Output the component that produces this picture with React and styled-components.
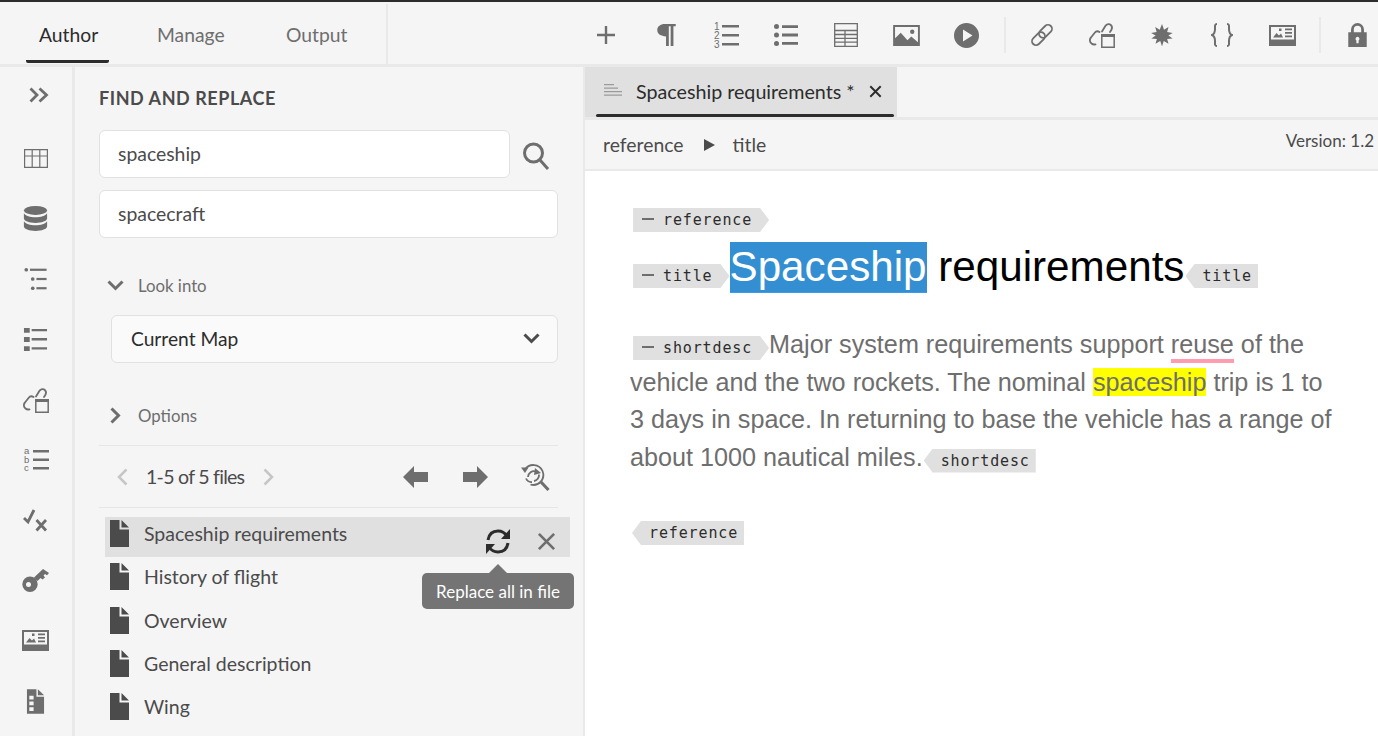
import React from "react";
import styled, { createGlobalStyle } from "styled-components";

const Global = createGlobalStyle`
  html, body { margin: 0; padding: 0; height: 100%; overflow: hidden; background: #fff; }
  body { font-family: "Lato", "Open Sans", sans-serif; }
  * { box-sizing: border-box; }
`;

const Page = styled.div`
  width: 1378px; height: 736px; display: flex; flex-direction: column;
  border-top: 2px solid #2c2c2c; overflow: hidden;
`;
const Header = styled.header`
  height: 65px; flex: none; display: flex; background: #f5f5f5; border-bottom: 3px solid #e9e9e9;
`;
const Tabs = styled.nav`
  width: 388px; flex: none; display: flex; padding-left: 26px; border-right: 2px solid #e9e9e9; margin-top: 2px;
`;
const Tab = styled.div`
  width: ${p => p.$w}px; height: 59px; padding: 18px 0 0 ${p => p.$pad}px; font-size: 19.3px; line-height: 26px;
  color: ${p => (p.$active ? "#2c2c2c" : "#6e6e6e")};
  border-bottom: 3px solid ${p => (p.$active ? "#2c2c2c" : "transparent")};
  border-radius: 0 0 2px 2px;
`;
const Tools = styled.div`
  flex: 1; display: flex; align-items: center; padding: 4px 0 0 188px; min-width: 0;
`;
const ToolSlot = styled.span`
  width: 60px; flex: none; display: flex; justify-content: center; align-items: center;
`;
const ToolSep = styled.span`
  width: 2px; height: 36px; background: #e9e9e9; flex: none; margin: 0 ${p => p.$r}px 0 ${p => p.$l}px;
`;
const Main = styled.div`flex: 1; display: flex; min-height: 0;`;
const Rail = styled.aside`
  width: 75px; flex: none; background: #f5f5f5; border-right: 3px solid #e9e9e9;
  display: flex; flex-direction: column; align-items: center; padding-right: 1px;
`;
const RailSlot = styled.span`
  height: ${p => (p.$first ? 56 : 60.35)}px; margin-bottom: ${p => (p.$first ? 5 : 0)}px; flex: none;
  display: flex; align-items: center; justify-content: center; width: 100%;
  padding-left: ${p => (p.$first ? 6 : 0)}px;
`;
const Panel = styled.section`
  width: 510px; flex: none; background: #f5f5f5; border-right: 2px solid #e9e9e9;
  padding: 0 25px 0 24px; position: relative; display: flex; flex-direction: column;
`;
const Title = styled.h2`
  margin: 19px 0 0; font-size: 18px; line-height: 24px; font-weight: 700; color: #4b4b4b; letter-spacing: .55px;
`;
const SearchRow = styled.div`display: flex; align-items: center; margin-top: 20px;`;
const Field = styled.div`
  height: 48px; flex: ${p => (p.$grow ? 1 : "none")}; background: #fff; border: 1px solid #e1e1e1; border-radius: 6px;
  padding: 0 0 1px 18px; display: flex; align-items: center; font-size: 19.4px; color: #4b4b4b;
  margin-top: ${p => p.$mt || 0}px;
`;
const SearchBtn = styled.span`width: 48px; flex: none; display: flex; justify-content: center; align-items: center; padding: 3px 0 0 3px;`;
const Disclosure = styled.div`
  display: flex; align-items: center; margin: ${p => p.$mt}px 0 0 8px; font-size: 16.8px; color: #6e6e6e; height: 24px; gap: 14px;
`;
const Chevron = styled.span`width: 17px; display: flex; justify-content: center;`;
const Select = styled.div`
  height: 48px; margin: 18px 0 0 12px; background: #fafafa; border: 1px solid #e1e1e1; border-radius: 6px;
  padding: 0 17px 1px 19px; display: flex; align-items: center; justify-content: space-between; font-size: 19.2px; color: #2c2c2c;
`;
const Rule = styled.hr`border: 0; height: 1px; background: #e6e6e6; margin: ${p => p.$mt}px 0 0;`;
const Pager = styled.div`
  height: 61px; display: flex; align-items: center; padding-left: 18px; font-size: 19.6px; color: #4b4b4b;
`;
const PagerLabel = styled.span`width: 100px; margin: 0 17px 0 18px; white-space: nowrap; letter-spacing: -0.75px;`;
const PagerActions = styled.div`display: flex; align-items: center; margin-left: auto; margin-right: -7px;`;
const PagerBtn = styled.span`width: 60px; display: flex; justify-content: center;`;
const List = styled.div`margin: 9px -12px 0 6px;`;
const Row = styled.div`
  height: 40px; margin-bottom: 3.33px; display: flex; padding: 3px 0 0 4px;
  background: ${p => (p.$active ? "#e0e0e0" : "transparent")};
`;
const RowName = styled.span`margin-left: 15px; font-size: 19.5px; line-height: 28px; color: #4b4b4b;`;
const RowActions = styled.div`margin-left: auto; display: flex; align-items: center; height: 42px;`;
const RowBtn = styled.span`width: 48px; display: flex; justify-content: center;`;
const Tooltip = styled.div`
  position: absolute; left: 347px; top: 506px; width: 152px; height: 36px; background: #747474; border-radius: 5px;
  color: #fff; font-size: 17px; display: flex; align-items: center; justify-content: center; white-space: nowrap;
  &::before {
    content: ""; position: absolute; left: 67px; top: -9px;
    border-left: 9px solid transparent; border-right: 9px solid transparent; border-bottom: 9px solid #747474;
  }
`;
const Workspace = styled.main`flex: 1; min-width: 0; display: flex; flex-direction: column; background: #fff;`;
const TabBar = styled.div`height: 53px; flex: none; background: #f5f5f5; border-bottom: 3px solid #e9e9e9;`;
const DocTab = styled.div`
  width: 312px; height: 50px; background: #e0e0e0; display: flex; align-items: center; padding: 0 0 2px 19px; position: relative;
  font-size: 19.7px; color: #2c2c2c;
  &::after { content: ""; position: absolute; left: 11px; right: 3px; bottom: 0; height: 3px; background: #2c2c2c; border-radius: 2px; }
`;
const DocName = styled.span`margin: 0 14px 0 14px; white-space: nowrap;`;
const Crumbs = styled.div`
  height: 51px; flex: none; background: #f5f5f5; border-bottom: 2px solid #e9e9e9; display: flex; align-items: center;
  padding: 0 4px 0 18px; font-size: 19.4px; color: #4b4b4b; position: relative;
`;
const CrumbArrow = styled.span`margin: 0 18px 0 20px; display: flex;`;
const Version = styled.span`margin-left: auto; font-size: 17px; align-self: flex-start; margin-top: 10px;`;
const Doc = styled.article`flex: 1; padding: 37px 0 0 45px; width: 760px;`;
const Tag = styled.span`
  display: inline-block; height: 24px; line-height: 24px; font-family: "DejaVu Sans Mono", "Liberation Mono", monospace;
  font-size: 15px; letter-spacing: .87px; color: #2c2c2c; background: #e0e0e0; white-space: nowrap; vertical-align: baseline;
`;
const StartTag = styled(Tag)`
  padding: 0 17px 0 9px; margin-left: 3px;
  clip-path: polygon(0 0, calc(100% - 9px) 0, 100% 50%, calc(100% - 9px) 100%, 0 100%);
`;
const EndTag = styled(Tag)`
  padding: 0 6px 0 17px; margin-left: 1px;
  clip-path: polygon(9px 0, 100% 0, 100% 100%, 9px 100%, 0 50%);
`;
const Dash = styled.span`
  display: inline-block; width: 12px; height: 2px; background: #6e6e6e; vertical-align: 5px; margin-right: 9px;
`;
const RootLine = styled.div`height: 33px;`;
const Heading = styled.h1`
  margin: 0; font: 400 42.2px/52px "Liberation Sans", Arial, sans-serif; color: #000; height: 52px; white-space: nowrap;
`;
const Selected = styled.span`background: #348fd2; color: #fff; display: inline-block; line-height: 50px; border-bottom: 1px solid #3d9af0;`;
const Para = styled.p`
  margin: 33px 0 0; font: 400 25.2px/37.5px "Liberation Sans", Arial, sans-serif; color: #6e6e6e; width: 708px;
`;
const Misspelt = styled.span`border-bottom: 4px solid #ff9cb0; display: inline-block; line-height: 30px;`;
const Mark = styled.span`background: #ffff00; display: inline-block; line-height: 28px;`;
const EndRoot = styled.div`margin: 45px 0 0 1px;`;

const C = "#6e6e6e";

const Plus = () => (
  <svg width="18" height="18" viewBox="0 0 18 18" aria-hidden="true"><path fill={C} d="M7.800 0h2.400v7.800H18v2.400h-7.800V18H7.800v-7.800H0V7.800h7.800z" /></svg>
);
const Pilcrow = () => (
  <svg width="19" height="24" viewBox="0 0 20 26" aria-hidden="true">
    <path fill={C} d="M8 1h12v2.600h-2.500V25h-3V3.600h-2V25h-3V14.500C4 14.500 0 12 0 7.700 0 3.500 3.500 1 8 1z" />
  </svg>
);
const NumList = () => (
  <svg width="26" height="30" viewBox="0 0 26 30" aria-hidden="true">
    <path fill={C} d="M9 5h17v2.600H9zM9 14h17v2.600H9zM9 23h17v2.600H9z" />
    <g fill={C} fontFamily="Liberation Sans" fontSize="10"><text x="1" y="10">1</text><text x="1" y="19">2</text><text x="1" y="28">3</text></g>
  </svg>
);
const BulList = () => (
  <svg width="24" height="22" viewBox="0 0 24 22" aria-hidden="true">
    <g fill={C}><circle cx="2.500" cy="2.500" r="2.500" /><circle cx="2.500" cy="11" r="2.500" /><circle cx="2.500" cy="19.500" r="2.500" /><path d="M8 1.200h16v2.800H8zM8 9.600h16v2.800H8zM8 18h16v2.800H8z" /></g>
  </svg>
);
const TableIco = () => (
  <svg width="24" height="24" viewBox="0 0 24 24" fill="none" stroke={C} strokeWidth="1.300" aria-hidden="true">
    <path d="M.700.700h22.600v22.600H.700z" />
    <path d="M.700 7.500h22.600M.700 11.500h22.600M.700 15.300h22.600M.700 19.200h22.600M11 7.500v15.800" />
  </svg>
);
const ImageIco = () => (
  <svg width="27" height="21" viewBox="0 0 28 22" aria-hidden="true">
    <path fill={C} fillRule="evenodd" d="M0 0h28v22H0zM2 2v12l6-6 7 8 4-4 7 6V2z" />
    <circle cx="20" cy="7" r="2.300" fill={C} />
  </svg>
);
const PlayIco = () => (
  <svg width="25" height="25" viewBox="0 0 25 25" aria-hidden="true">
    <path fill={C} fillRule="evenodd" d="M12.500 0a12.500 12.500 0 1 1 0 25 12.500 12.500 0 0 1 0-25zM9 6.500v12l9.500-6z" />
  </svg>
);
const LinkIco = () => (
  <svg width="24" height="24" viewBox="0 0 24 24" fill="none" stroke={C} strokeWidth="1.800" aria-hidden="true">
    <rect x="8" y="4.300" width="15" height="8" rx="4" transform="rotate(-45 15.500 8.300)" />
    <rect x="1" y="11.700" width="15" height="8" rx="4" transform="rotate(-45 8.500 15.700)" />
  </svg>
);
const LinkDoc = () => (
  <svg width="26" height="26" viewBox="0 0 26 26" fill="none" stroke={C} strokeWidth="1.800" strokeLinecap="round" aria-hidden="true">
    <path d="M13 9.500L16.500 3.800a3.500 3.500 0 0 1 5.500-.6c1.300 1.300 1.300 3 .3 4.800L21 10" />
    <path d="M10.500 10a3.500 3.500 0 0 0-4.800.8L2 15.500a4 4 0 0 0 .5 6c1 .9 2.500 1.200 4 .8" />
    <path strokeLinecap="butt" strokeWidth="1.500" d="M12.800 12.800h12.400v12.400H12.800z" />
    <path stroke="none" fill={C} d="M12 12h14v3H12z" />
  </svg>
);
const Burst = () => (
  <svg width="22" height="22" viewBox="0 0 24 24" aria-hidden="true">
    <path fill={C} d="M12 0l2.200 6.400 4.900-3-1.500 5.400 6 .9-4.700 2.900 4.700 3.200-6 .5 1.500 5.300-5.200-3-1.900 5.800-1.900-5.800-5.200 3 1.500-5.300-6-.5 4.700-3.200L.100 9.700l6-.9-1.500-5.400 4.900 3z" />
  </svg>
);
const Braces = () => (
  <svg width="22" height="24" viewBox="0 0 22 24" fill="none" stroke={C} strokeWidth="2" aria-hidden="true">
    <path d="M6 1C3.500 1 4 3 4 6c0 3-.5 5-3 6 2.500 1 3 3 3 6 0 3-.5 5 2 5" />
    <path d="M16 1c2.500 0 2 2 2 5 0 3 .5 5 3 6-2.500 1-3 3-3 6 0 3 .5 5-2 5" />
  </svg>
);
const CardIco = () => (
  <svg width="27" height="21" viewBox="0 0 27 21" aria-hidden="true">
    <path fill={C} fillRule="evenodd" d="M0 0h27v21H0zM2 2v12.500h23V2z" />
    <path fill={C} d="M4 12.500l3.500-4.500 2.500 2.500 2-2 2 4zM10 3.500h2.500V6H10zM16 3.500h7v1.800h-7zM16 7h7v1.800h-7zM16 10.500h7v1.800h-7zM2 16.500h23v1.500H2z" />
  </svg>
);
const LockIco = () => (
  <svg width="19" height="24" viewBox="0 0 20 26" aria-hidden="true">
    <path fill={C} fillRule="evenodd" d="M3 10V7a7 7 0 0 1 14 0v3h3v16H0V10zm3 0h8V7a4 4 0 0 0-8 0zm4 5a2.200 2.200 0 0 0-1.200 4v3h2.400v-3A2.200 2.200 0 0 0 10 15z" />
  </svg>
);
const DoubleChev = () => (
  <svg width="20" height="16" viewBox="0 0 20 16" fill="none" stroke={C} strokeWidth="2.800" aria-hidden="true">
    <path d="M1.500 1.500l6.500 6.500-6.500 6.500M10.500 1.500l7 6.500-7 6.500" />
  </svg>
);
const GridIco = () => (
  <svg width="24" height="19" viewBox="0 0 24 19" fill="none" stroke={C} strokeWidth="1.200" aria-hidden="true">
    <path d="M.600.600h22.800v17.800H.600zM.600 7h22.800M8.200.600v17.800M15.800.600v17.800" />
  </svg>
);
const DbIco = () => (
  <svg width="25" height="25" viewBox="0 0 26 28" aria-hidden="true">
    <g fill={C}>
      <ellipse cx="13" cy="5" rx="13" ry="5" />
      <path d="M0 8c2 3 7 4.500 13 4.500S24 11 26 8v6c0 2.500-6 5-13 5S0 16.500 0 14z" />
      <path d="M0 17c2 3 7 4.500 13 4.500S24 20 26 17v6c0 2.500-6 5-13 5S0 25.500 0 23z" />
    </g>
  </svg>
);
const TreeList = () => (
  <svg width="23" height="24" viewBox="0 0 24 26" aria-hidden="true">
    <g fill={C}><circle cx="2" cy="3" r="2" /><path d="M6 1.800h18v2.400H6z" /><circle cx="9" cy="13" r="2" /><path d="M13 11.800h11v2.400H13z" /><circle cx="9" cy="23" r="2" /><path d="M13 21.800h11v2.400H13z" /></g>
  </svg>
);
const TopicList = () => (
  <svg width="25" height="25" viewBox="0 0 26 26" aria-hidden="true">
    <path fill={C} d="M1 1h6v5H1zM9 2h16v2.500H9zM1 10.500h6v5H1zM9 11.500h16V14H9zM1 20h6v5H1zM9 21h16v2.500H9z" />
  </svg>
);
const AlphaList = () => (
  <svg width="26" height="28" viewBox="0 0 26 28" aria-hidden="true">
    <path fill={C} d="M10 4h16v2.500H10zM10 12.500h16V15H10zM10 21h16v2.500H10z" />
    <g fill={C} fontFamily="Liberation Sans" fontSize="9.500"><text x="1" y="8">a</text><text x="1" y="16.500">b</text><text x="1" y="25">c</text></g>
  </svg>
);
const CheckX = () => (
  <svg width="25" height="23" viewBox="0 0 25 23" fill="none" stroke={C} strokeWidth="2.800" aria-hidden="true">
    <path d="M1 9l4 4 6-12" /><path d="M13.500 11l9.500 10.500M23 11l-9.500 10.500" />
  </svg>
);
const KeyIco = () => (
  <svg width="27" height="23" viewBox="0 0 27 23" aria-hidden="true">
    <path fill={C} fillRule="evenodd" d="M8 7.500a7.700 7.700 0 1 1 0 15.400 7.700 7.700 0 0 1 0-15.400zM6.500 13a2.500 2.500 0 1 0 0 5 2.500 2.500 0 0 0 0-5zM12 8.500L21 0l6 4-2 2.200-2-1.200-1.500 1.500 1.500 2-2.500 2-2-1.500-3 3z" />
  </svg>
);
const MapDoc = () => (
  <svg width="19" height="25" viewBox="0 0 20 26" aria-hidden="true">
    <path fill={C} fillRule="evenodd" d="M1 0h10v8h8v18H1zM3.500 7v4H8V7zM3.500 13v4H8v-4zM3.500 19v4H8v-4z" />
    <path fill={C} d="M12.500 0L19 6.500h-6.500z" />
  </svg>
);
const Search = () => (
  <svg width="28" height="30" viewBox="0 0 28 30" fill="none" stroke={C} strokeWidth="3" aria-hidden="true">
    <circle cx="11.500" cy="12" r="9" /><path d="M18 19l8 9" />
  </svg>
);
const ChevDown = ({ c = C }) => (
  <svg width="17" height="11" viewBox="0 0 17 11" fill="none" stroke={c} strokeWidth="3" aria-hidden="true"><path d="M1.500 1.500l7 7 7-7" /></svg>
);
const ChevRight = () => (
  <svg width="11" height="17" viewBox="0 0 11 17" fill="none" stroke={C} strokeWidth="3" aria-hidden="true"><path d="M1.500 1.500l7 7-7 7" /></svg>
);
const PagerChev = ({ left }) => (
  <svg width="11" height="18" viewBox="0 0 11 18" fill="none" stroke="#c6c6c6" strokeWidth="2.500" aria-hidden="true">
    <path d={left ? "M9.500 1.500L2 9l7.500 7.500" : "M1.500 1.500L9 9l-7.500 7.500"} />
  </svg>
);
const ArrowL = () => <svg width="25" height="22" viewBox="0 0 25 22" aria-hidden="true"><path fill={C} d="M0 11L11 0v6h14v10H11v6z" /></svg>;
const ArrowR = () => <svg width="25" height="22" viewBox="0 0 25 22" aria-hidden="true"><path fill={C} d="M25 11L14 0v6H0v10h14v6z" /></svg>;
const ReplaceFind = () => (
  <svg width="30" height="28" viewBox="0 0 30 28" fill="none" stroke={C} strokeWidth="1.800" aria-hidden="true">
    <path d="M5 6.500A10 10 0 0 1 22.500 8a10 10 0 0 1-12 13.500" />
    <path fill={C} stroke="none" d="M1 4.500h7.500L5 10z" />
    <path d="M6 15.500A6 6 0 0 0 12 19" />
    <path d="M8 14a6 6 0 0 1 8-5.500" />
    <path d="M19 11.500a6 6 0 0 1-5 6.500" />
    <path fill={C} stroke="none" d="M15 5l6 5-7 2z" />
    <path d="M21 19l7.500 8" strokeWidth="3" />
  </svg>
);
const FileIco = () => (
  <svg width="20" height="27" viewBox="0 0 20 27" aria-hidden="true">
    <path fill="#4b4b4b" d="M1 0h9.500v9.500H20V27H1zM12.500 0L20 7.500h-7.500z" />
  </svg>
);
const Sync = () => (
  <svg width="26" height="27" viewBox="0 0 26 27" fill="none" aria-hidden="true">
    <path stroke="#2c2c2c" strokeWidth="3" d="M3 12C4 6 8 3 13 3c4 0 7 2 9 5M23 15c-1 6-5 9-10 9-4 0-7-2-9-5" />
    <path fill="#2c2c2c" d="M25 1v10h-9zM1 26V16h9z" />
  </svg>
);
const Close = ({ s = 20, c = C, sw = 2.800 }) => (
  <svg width={s} height={s} viewBox="0 0 20 20" fill="none" stroke={c} strokeWidth={sw} aria-hidden="true"><path d="M2 2l16 16M18 2L2 18" /></svg>
);
const LinesIco = () => (
  <svg width="18" height="14" viewBox="0 0 18 14" aria-hidden="true">
    <path fill="#9a9a9a" d="M0 0h10v1.300H0zM0 3.500h14v1.300H0zM0 7h18v1.300H0zM0 10.500h18v1.300H0z" />
  </svg>
);
const TriRight = () => <svg width="11" height="12" viewBox="0 0 11 12" aria-hidden="true"><path fill="#4b4b4b" d="M0 0l11 6-11 6z" /></svg>;

const toolIcons = [<Plus />, <Pilcrow />, <NumList />, <BulList />, <TableIco />, <ImageIco />, <PlayIco />];
const toolIcons2 = [<LinkIco />, <LinkDoc />, <Burst />, <Braces />, <CardIco />];
const railIcons = [<DoubleChev />, <GridIco />, <DbIco />, <TreeList />, <TopicList />, <LinkDoc />, <AlphaList />, <CheckX />, <KeyIco />, <CardIco />, <MapDoc />];
const files = ["Spaceship requirements", "History of flight", "Overview", "General description", "Wing"];

export default function App() {
  return (
    <>
      <Global />
      <Page>
        <Header>
          <Tabs>
            <Tab $active $w={83} $pad={13}>Author</Tab>
            <Tab $w={129} $pad={48}>Manage</Tab>
            <Tab $w={130} $pad={48}>Output</Tab>
          </Tabs>
          <Tools>
            {toolIcons.map((ic, i) => <ToolSlot key={i}>{ic}</ToolSlot>)}
            <ToolSep $l={8} $r={6} />
            {toolIcons2.map((ic, i) => <ToolSlot key={i}>{ic}</ToolSlot>)}
            <ToolSep $l={7} $r={6} />
            <ToolSlot><LockIco /></ToolSlot>
          </Tools>
        </Header>
        <Main>
          <Rail>
            {railIcons.map((ic, i) => <RailSlot key={i} $first={i === 0}>{ic}</RailSlot>)}
          </Rail>
          <Panel>
            <Title>FIND AND REPLACE</Title>
            <SearchRow>
              <Field $grow>spaceship</Field>
              <SearchBtn><Search /></SearchBtn>
            </SearchRow>
            <Field $mt={12}>spacecraft</Field>
            <Disclosure $mt={35}><Chevron><ChevDown /></Chevron>Look into</Disclosure>
            <Select>Current Map<ChevDown c="#4b4b4b" /></Select>
            <Disclosure $mt={40}><Chevron><ChevRight /></Chevron>Options</Disclosure>
            <Rule $mt={18} />
            <Pager>
              <PagerChev left />
              <PagerLabel>1-5 of 5 files</PagerLabel>
              <PagerChev />
              <PagerActions>
                <PagerBtn><ArrowL /></PagerBtn>
                <PagerBtn><ArrowR /></PagerBtn>
                <PagerBtn><ReplaceFind /></PagerBtn>
              </PagerActions>
            </Pager>
            <Rule $mt={0} />
            <List>
              {files.map((f, i) => (
                <Row key={f} $active={i === 0}>
                  <FileIco />
                  <RowName>{f}</RowName>
                  {i === 0 && (
                    <RowActions>
                      <RowBtn><Sync /></RowBtn>
                      <RowBtn><Close s={19} /></RowBtn>
                    </RowActions>
                  )}
                </Row>
              ))}
            </List>
            <Tooltip>Replace all in file</Tooltip>
          </Panel>
          <Workspace>
            <TabBar>
              <DocTab>
                <LinesIco />
                <DocName>Spaceship requirements *</DocName>
                <Close s={13} c="#2c2c2c" sw={3} />
              </DocTab>
            </TabBar>
            <Crumbs>
              reference
              <CrumbArrow><TriRight /></CrumbArrow>
              title
              <Version>Version: 1.2</Version>
            </Crumbs>
            <Doc>
              <RootLine><StartTag><Dash />reference</StartTag></RootLine>
              <Heading>
                <StartTag><Dash />title</StartTag><Selected>Spaceship</Selected> requirements<EndTag>title</EndTag>
              </Heading>
              <Para>
                <StartTag><Dash />shortdesc</StartTag>Major system requirements support <Misspelt>reuse</Misspelt> of the vehicle and the two rockets. The nominal <Mark>spaceship</Mark> trip is 1 to 3 days in space. In returning to base the vehicle has a range of about 1000 nautical miles.<EndTag>shortdesc</EndTag>
              </Para>
              <EndRoot><EndTag>reference</EndTag></EndRoot>
            </Doc>
          </Workspace>
        </Main>
      </Page>
    </>
  );
}
